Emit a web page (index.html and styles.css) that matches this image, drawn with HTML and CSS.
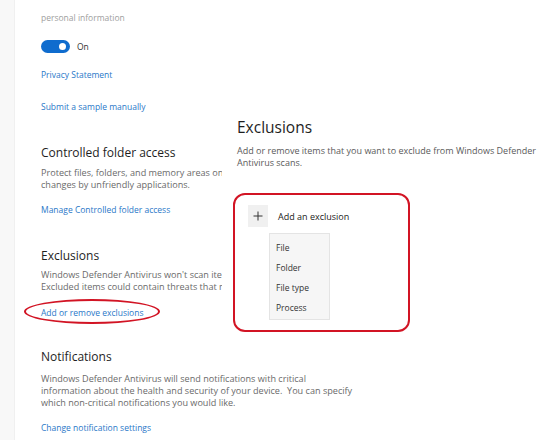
FILE: index.html
```html
<!DOCTYPE html>
<html>
<head>
<meta charset="utf-8">
<link rel="stylesheet" href="styles.css">
</head>
<body>
<div class="page">
  <div class="rail"></div>
  <div class="main">
    <p class="cut">personal information</p>
    <div class="toggle-row">
      <span class="toggle"><span class="knob"></span></span>
      <span class="toggle-label">On</span>
    </div>
    <a class="link link-privacy">Privacy Statement</a>
    <a class="link link-submit">Submit a sample manually</a>

    <section class="section s-cfa">
      <h2 class="title">Controlled folder access</h2>
      <p class="desc desc-clip">Protect files, folders, and memory areas on your device from unauthorized<br>changes by unfriendly applications.</p>
      <a class="link">Manage Controlled folder access</a>
    </section>

    <section class="section s-excl">
      <h2 class="title">Exclusions</h2>
      <p class="desc desc-clip">Windows Defender Antivirus won't scan items that have been excluded.<br>Excluded items could contain threats that make your device vulnerable.</p>
      <span class="circled"><a class="link">Add or remove exclusions</a><span class="ellipse"></span></span>
    </section>

    <section class="section s-notif">
      <h2 class="title">Notifications</h2>
      <p class="desc desc-wide">Windows Defender Antivirus will send notifications with critical<br>information about the health and security of your device.&nbsp; You can specify<br>which non-critical notifications you would like.</p>
      <a class="link">Change notification settings</a>
    </section>
  </div>

  <div class="overlay">
    <h2 class="ov-title">Exclusions</h2>
    <p class="ov-desc">Add or remove items that you want to exclude from Windows Defender<br>Antivirus scans.</p>
    <div class="redbox">
      <div class="add-row">
        <span class="plus-btn">
          <svg width="10" height="10" viewBox="0 0 10 10"><path d="M5 0.5V9.5M0.5 5H9.5" stroke="#333" stroke-width="1" fill="none"/></svg>
        </span>
        <span class="add-label">Add an exclusion</span>
      </div>
      <ul class="menu">
        <li>File</li>
        <li>Folder</li>
        <li>File type</li>
        <li>Process</li>
      </ul>
    </div>
  </div>
</div>
</body>
</html>
```
FILE: styles.css
```css
html, body {
  margin: 0;
  padding: 0;
  background: #fff;
}
body {
  font-family: "Open Sans", "Noto Sans", sans-serif;
  width: 557px;
  height: 440px;
  overflow: hidden;
}
.page {
  position: relative;
  display: flex;
  width: 557px;
  height: 440px;
}
.rail {
  width: 14px;
  flex: none;
  background: #f8f8f8;
  border-right: 1px solid #f0f0f0;
}
.main {
  flex: 1;
  padding-left: 26px;
  display: flex;
  flex-direction: column;
  align-items: flex-start;
  white-space: nowrap;
}
.cut {
  margin: 12px 0 0;
  font-size: 8.5px;
  line-height: 12px;
  color: #a0a0a0;
}
.toggle-row {
  margin-top: 16px;
  display: flex;
  align-items: center;
  gap: 7px;
  height: 13px;
}
.toggle {
  width: 29px;
  height: 13px;
  border-radius: 7px;
  background: #0f6cce;
  position: relative;
  display: block;
}
.knob {
  position: absolute;
  right: 4px;
  top: 3px;
  width: 7px;
  height: 7px;
  border-radius: 50%;
  background: #fff;
}
.toggle-label {
  font-size: 8.5px;
  color: #333;
}
.link {
  display: block;
  font-size: 8.5px;
  line-height: 12px;
  color: #2a78c8;
}
.link-privacy { margin-top: 16px; }
.link-submit { margin-top: 20px; }
.section {
  display: flex;
  flex-direction: column;
  align-items: flex-start;
}
.title {
  margin: 0;
  font-size: 12px;
  line-height: 18px;
  font-weight: 400;
  color: #1e1e1e;
}
.desc {
  margin: 5px 0 0;
  font-size: 9.1px;
  line-height: 12px;
  color: #6a6a6a;
}
.desc-clip {
  width: 181px;
  overflow: hidden;
}
.section .link { margin-top: 13px; }
.s-cfa { margin-top: 31px; }
.s-excl { margin-top: 31px; }
.s-excl .desc { margin-top: 4px; }
.s-excl .circled { margin-top: 14px; }
.s-notif { margin-top: 29px; }
.s-notif .desc { margin-top: 7px; }
.circled {
  position: relative;
  display: block;
}
.circled .link { margin-top: 0; }
.ellipse {
  position: absolute;
  left: -17px;
  top: -8px;
  width: 132px;
  height: 21px;
  border: 2px solid #d21424;
  border-radius: 50%;
}
.overlay {
  position: absolute;
  left: 222px;
  top: 100px;
  width: 335px;
  height: 268px;
  background: #fff;
  padding-left: 15px;
  box-sizing: border-box;
  white-space: nowrap;
}
.ov-title {
  margin: 16px 0 0;
  font-size: 15.5px;
  line-height: 22px;
  font-weight: 400;
  color: #1e1e1e;
}
.ov-desc {
  margin: 7px 0 0;
  font-size: 9px;
  line-height: 12px;
  color: #5a5a5a;
}
.redbox {
  margin: 24px 0 0 -4px;
  width: 177px;
  height: 139px;
  box-sizing: border-box;
  border: 2px solid #d21424;
  border-radius: 12px;
  padding: 10px 0 0 13px;
}
.add-row {
  display: flex;
  align-items: center;
  gap: 10px;
}
.plus-btn {
  width: 20px;
  height: 22px;
  background: #f0f0f0;
  display: flex;
  align-items: center;
  justify-content: center;
}
.add-label {
  font-size: 9px;
  color: #222;
}
.menu {
  list-style: none;
  margin: 6px 0 0 21px;
  padding: 4px 0;
  width: 61px;
  height: 87px;
  box-sizing: border-box;
  background: #f6f6f6;
  border: 1px solid #e4e4e4;
}
.menu li {
  font-size: 8.5px;
  line-height: 20px;
  padding-left: 6px;
  color: #333;
}
```
